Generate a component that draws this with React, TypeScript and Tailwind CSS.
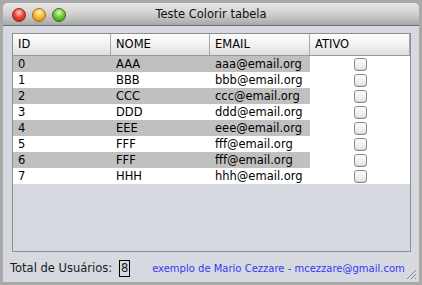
import React from 'react';

interface Usuario {
  id: number;
  nome: string;
  email: string;
  ativo: boolean;
}

const usuarios: Usuario[] = [
  { id: 0, nome: 'AAA', email: 'aaa@email.org', ativo: false },
  { id: 1, nome: 'BBB', email: 'bbb@email.org', ativo: false },
  { id: 2, nome: 'CCC', email: 'ccc@email.org', ativo: false },
  { id: 3, nome: 'DDD', email: 'ddd@email.org', ativo: false },
  { id: 4, nome: 'EEE', email: 'eee@email.org', ativo: false },
  { id: 5, nome: 'FFF', email: 'fff@email.org', ativo: false },
  { id: 6, nome: 'FFF', email: 'fff@email.org', ativo: false },
  { id: 7, nome: 'HHH', email: 'hhh@email.org', ativo: false },
];

const colunas = ['ID', 'NOME', 'EMAIL', 'ATIVO'];
const larguras = ['w-[98px]', 'w-[99px]', 'w-[100px]', 'w-[100px]'];

function Semaforo({ cor }: { cor: 'red' | 'yellow' | 'green' }) {
  const bg =
    cor === 'red'
      ? 'bg-[radial-gradient(circle_at_50%_30%,#ffd0c8_0%,#f0463c_45%,#b0180f_100%)] border-[#9a1e16]'
      : cor === 'yellow'
      ? 'bg-[radial-gradient(circle_at_50%_30%,#fff4c0_0%,#f7c03a_45%,#c27a0c_100%)] border-[#a66c12]'
      : 'bg-[radial-gradient(circle_at_50%_30%,#e0fab8_0%,#72cc3a_45%,#348212_100%)] border-[#337016]';
  return <div className={`w-[14px] h-[14px] rounded-full border ${bg}`} />;
}

function Checkbox() {
  return (
    <div className="w-[13px] h-[13px] rounded-[3px] border border-[#8a8a8a] bg-[linear-gradient(#ffffff,#e4e4e4)] shadow-[inset_0_-1px_0_#d0d0d0]" />
  );
}

export default function App() {
  return (
    <div className="w-[422px] h-[285px] bg-[#a9a9a9] p-[3px] font-['DejaVu_Sans',sans-serif]">
      <div className="w-[416px] h-[279px] flex flex-col rounded-t-[5px] overflow-hidden bg-[#d6d9df]">
        {/* barra de titulo */}
        <div className="relative h-[23px] flex items-center bg-[linear-gradient(#e9e9e9,#cfcfcf_50%,#a9a9a9)] border-b border-[#6f6f6f]">
          <div className="flex gap-[6px] pl-[9px] pt-[1px]">
            <Semaforo cor="red" />
            <Semaforo cor="yellow" />
            <Semaforo cor="green" />
          </div>
          <span className="absolute left-0 right-0 text-center text-[11.5px] text-[#111] leading-none pt-[1px]">
            Teste Colorir tabela
          </span>
        </div>

        {/* tabela */}
        <div className="ml-[9px] mt-[7px] w-[399px] h-[219px] border border-[#8e8e8e] bg-[#d6d9df]">
          <div className="flex h-[22px] bg-[linear-gradient(#fdfdfd,#f2f2f2_50%,#dedede)] border-b border-[#9a9a9a]">
            {colunas.map((c, i) => (
              <div
                key={c}
                className={`${larguras[i]} border-r border-[#a8a8a8] pl-[5px] flex items-center text-[11.5px] text-black`}
              >
                {c}
              </div>
            ))}
          </div>
          {usuarios.map((u, i) => {
            const cinza = i % 2 === 0 ? 'bg-[#c0c0c0]' : 'bg-white';
            return (
              <div key={i} className="flex h-[16px] text-[11.5px] text-black leading-[17px]">
                <div className={`w-[98px] pl-[5px] ${cinza}`}>{u.id}</div>
                <div className={`w-[99px] pl-[5px] ${cinza}`}>{u.nome}</div>
                <div className={`w-[100px] pl-[5px] ${cinza}`}>{u.email}</div>
                <div className="w-[100px] bg-white flex items-center justify-center">
                  <Checkbox />
                </div>
              </div>
            );
          })}
        </div>

        {/* rodape */}
        <div className="relative flex-1 flex items-center pl-[7px] pt-[3px]">
          <span className="text-[11.5px] text-[#1a1a1a]">Total de Usuários:</span>
          <span className="ml-[7px] h-[17px] w-[11px] border border-black flex items-center justify-center text-[11.5px] text-[#1a1a1a]">
            8
          </span>
          <span className="ml-[22px] text-[10px] text-[#3636f5]">
            exemplo de Mario Cezzare - mcezzare@gmail.com
          </span>
          <svg className="absolute right-[2px] bottom-[2px]" width="12" height="12" viewBox="0 0 12 12">
            <line x1="11" y1="2" x2="2" y2="11" stroke="#8a8a8a" strokeWidth="1" />
            <line x1="11" y1="6" x2="6" y2="11" stroke="#8a8a8a" strokeWidth="1" />
            <line x1="11" y1="10" x2="10" y2="11" stroke="#8a8a8a" strokeWidth="1" />
          </svg>
        </div>
      </div>
    </div>
  );
}
